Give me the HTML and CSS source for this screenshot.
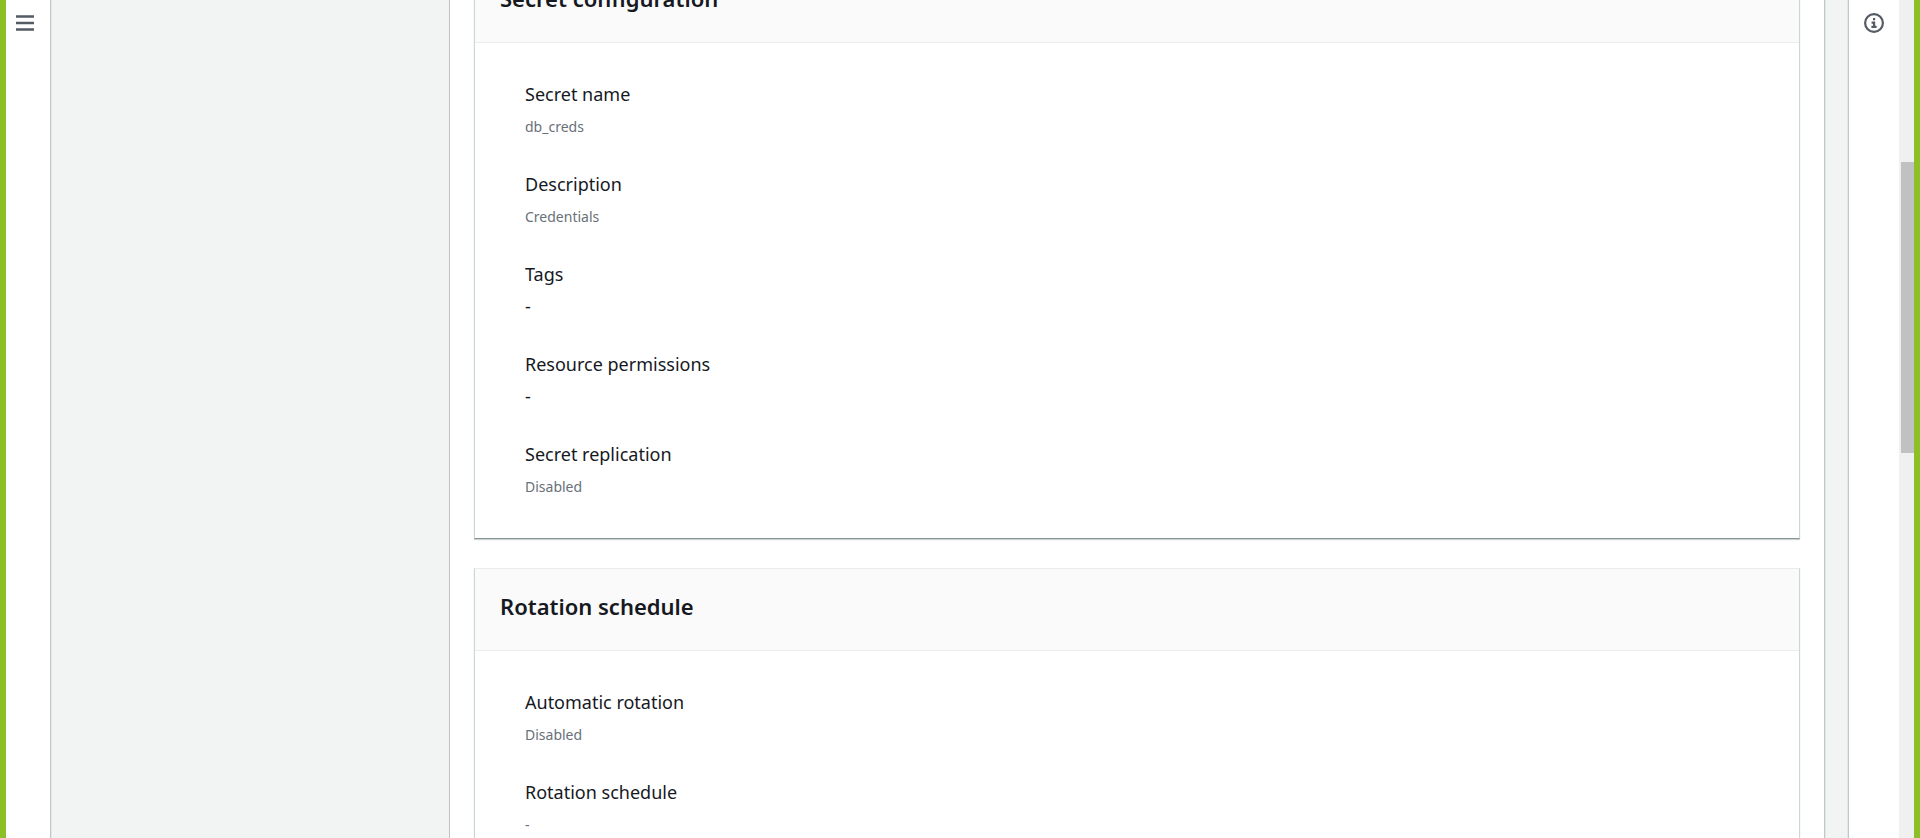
FILE: index.html
```html
<!DOCTYPE html>
<html lang="en">
<head>
<meta charset="utf-8">
<meta name="viewport" content="width=device-width, initial-scale=1">
<title>Store a new secret</title>
<link rel="stylesheet" href="styles.css">
</head>
<body>
<div class="shell">
  <nav class="rail rail-nav">
    <button class="icon-button" type="button" aria-label="Open navigation">
      <svg width="18" height="18" viewBox="0 0 18 18" fill="none" stroke="#545b64" stroke-width="2.6"><path d="M0 2.5h18M0 9h18M0 15.5h18"/></svg>
    </button>
  </nav>
  <aside class="gutter"></aside>
  <main class="content">
    <div class="review">
      <section class="card">
        <header class="card-header"><h2>Secret configuration</h2></header>
        <dl class="fields">
          <div class="field"><dt>Secret name</dt><dd>db_creds</dd></div>
          <div class="field"><dt>Description</dt><dd>Credentials</dd></div>
          <div class="field"><dt>Tags</dt><dd class="empty">-</dd></div>
          <div class="field"><dt>Resource permissions</dt><dd class="empty">-</dd></div>
          <div class="field"><dt>Secret replication</dt><dd>Disabled</dd></div>
        </dl>
      </section>
      <section class="card">
        <header class="card-header"><h2>Rotation schedule</h2></header>
        <dl class="fields">
          <div class="field"><dt>Automatic rotation</dt><dd>Disabled</dd></div>
          <div class="field"><dt>Rotation schedule</dt><dd>-</dd></div>
        </dl>
      </section>
    </div>
  </main>
  <div class="edge"></div>
  <aside class="rail rail-help">
    <button class="icon-button" type="button" aria-label="Open help panel">
      <svg width="20" height="20" viewBox="0 0 20 20"><circle cx="10" cy="10" r="8.9" fill="none" stroke="#545b64" stroke-width="2.2"/><path fill="#545b64" d="M9 5h2.2v2.2H9zM7.6 8.6h3.6v4.2h1.4V15H7.4v-2.2H9v-2H7.6z"/></svg>
    </button>
  </aside>
  <div class="scroll-track"><div class="scroll-thumb"></div></div>
</div>
</body>
</html>
```
FILE: styles.css
```css
* { box-sizing: border-box; }

body {
  margin: 0;
  overflow: hidden;
  font-family: "Noto Sans", "Open Sans", sans-serif;
  color: #16191f;
}

.shell {
  display: flex;
  height: 100vh;
  border-left: 6px solid #8dbf26;
  border-right: 6px solid #8dbf26;
  background: #f2f3f3;
}

.rail {
  flex: none;
  display: flex;
  justify-content: center;
  align-items: flex-start;
  background: #fff;
}

.rail-nav {
  width: 45px;
  justify-content: flex-start;
  padding: 14px 0 0 10px;
  border-right: 1px solid #bfc8c8;
}

.rail-help {
  width: 51px;
  padding-top: 13px;
  border-left: 1px solid #bfc8c8;
}

.icon-button {
  padding: 0;
  border: 0;
  background: none;
  cursor: pointer;
}

.icon-button svg { display: block; }

.gutter {
  width: 398px;
  flex: none;
  border-left: 1px solid #e3e7e7;
  background: #f2f4f4;
}

.content {
  flex: 1;
  min-width: 0;
  overflow: hidden;
  padding: 0 24px;
  border-left: 1px solid #bfc4c4;
  border-right: 1px solid #bfc8c8;
  background: #fff;
}

.edge {
  width: 23px;
  flex: none;
  border-left: 1px solid #e3e7e7;
  border-right: 1px solid #e3e7e7;
  background: #f1f4f3;
}

/* Scrolled part-way through the review step */
.review {
  display: flex;
  flex-direction: column;
  gap: 29px;
  margin-top: -40px;
}

.card {
  border: 1px solid #cdd6d6;
  border-top-color: #eaeded;
  border-bottom-color: #879596;
  box-shadow: 0 1px 1px rgba(0, 28, 36, 0.2);
}

.card-header {
  padding: 21px 25px 27px;
  border-bottom: 1px solid #eaeded;
  background: #fafafa;
}

h2 {
  margin: 0;
  font-size: 22px;
  line-height: 33px;
  font-weight: 600;
}

.fields {
  display: flex;
  flex-direction: column;
  gap: 28px;
  margin: 0;
  padding: 37px 50px 36px;
}

dt {
  font-size: 18px;
  line-height: 28px;
}

dd {
  margin: 4px 0 0;
  font-size: 14px;
  line-height: 30px;
  color: #687078;
}

dd.empty {
  padding-bottom: 2px;
  font-size: 18px;
  line-height: 28px;
  color: #16191f;
}

.scroll-track {
  width: 15px;
  flex: none;
  padding-left: 2px;
  background: #f0f0f0;
}

.scroll-thumb {
  height: 291px;
  margin-top: 162px;
  background: #c1c1c1;
}
```
